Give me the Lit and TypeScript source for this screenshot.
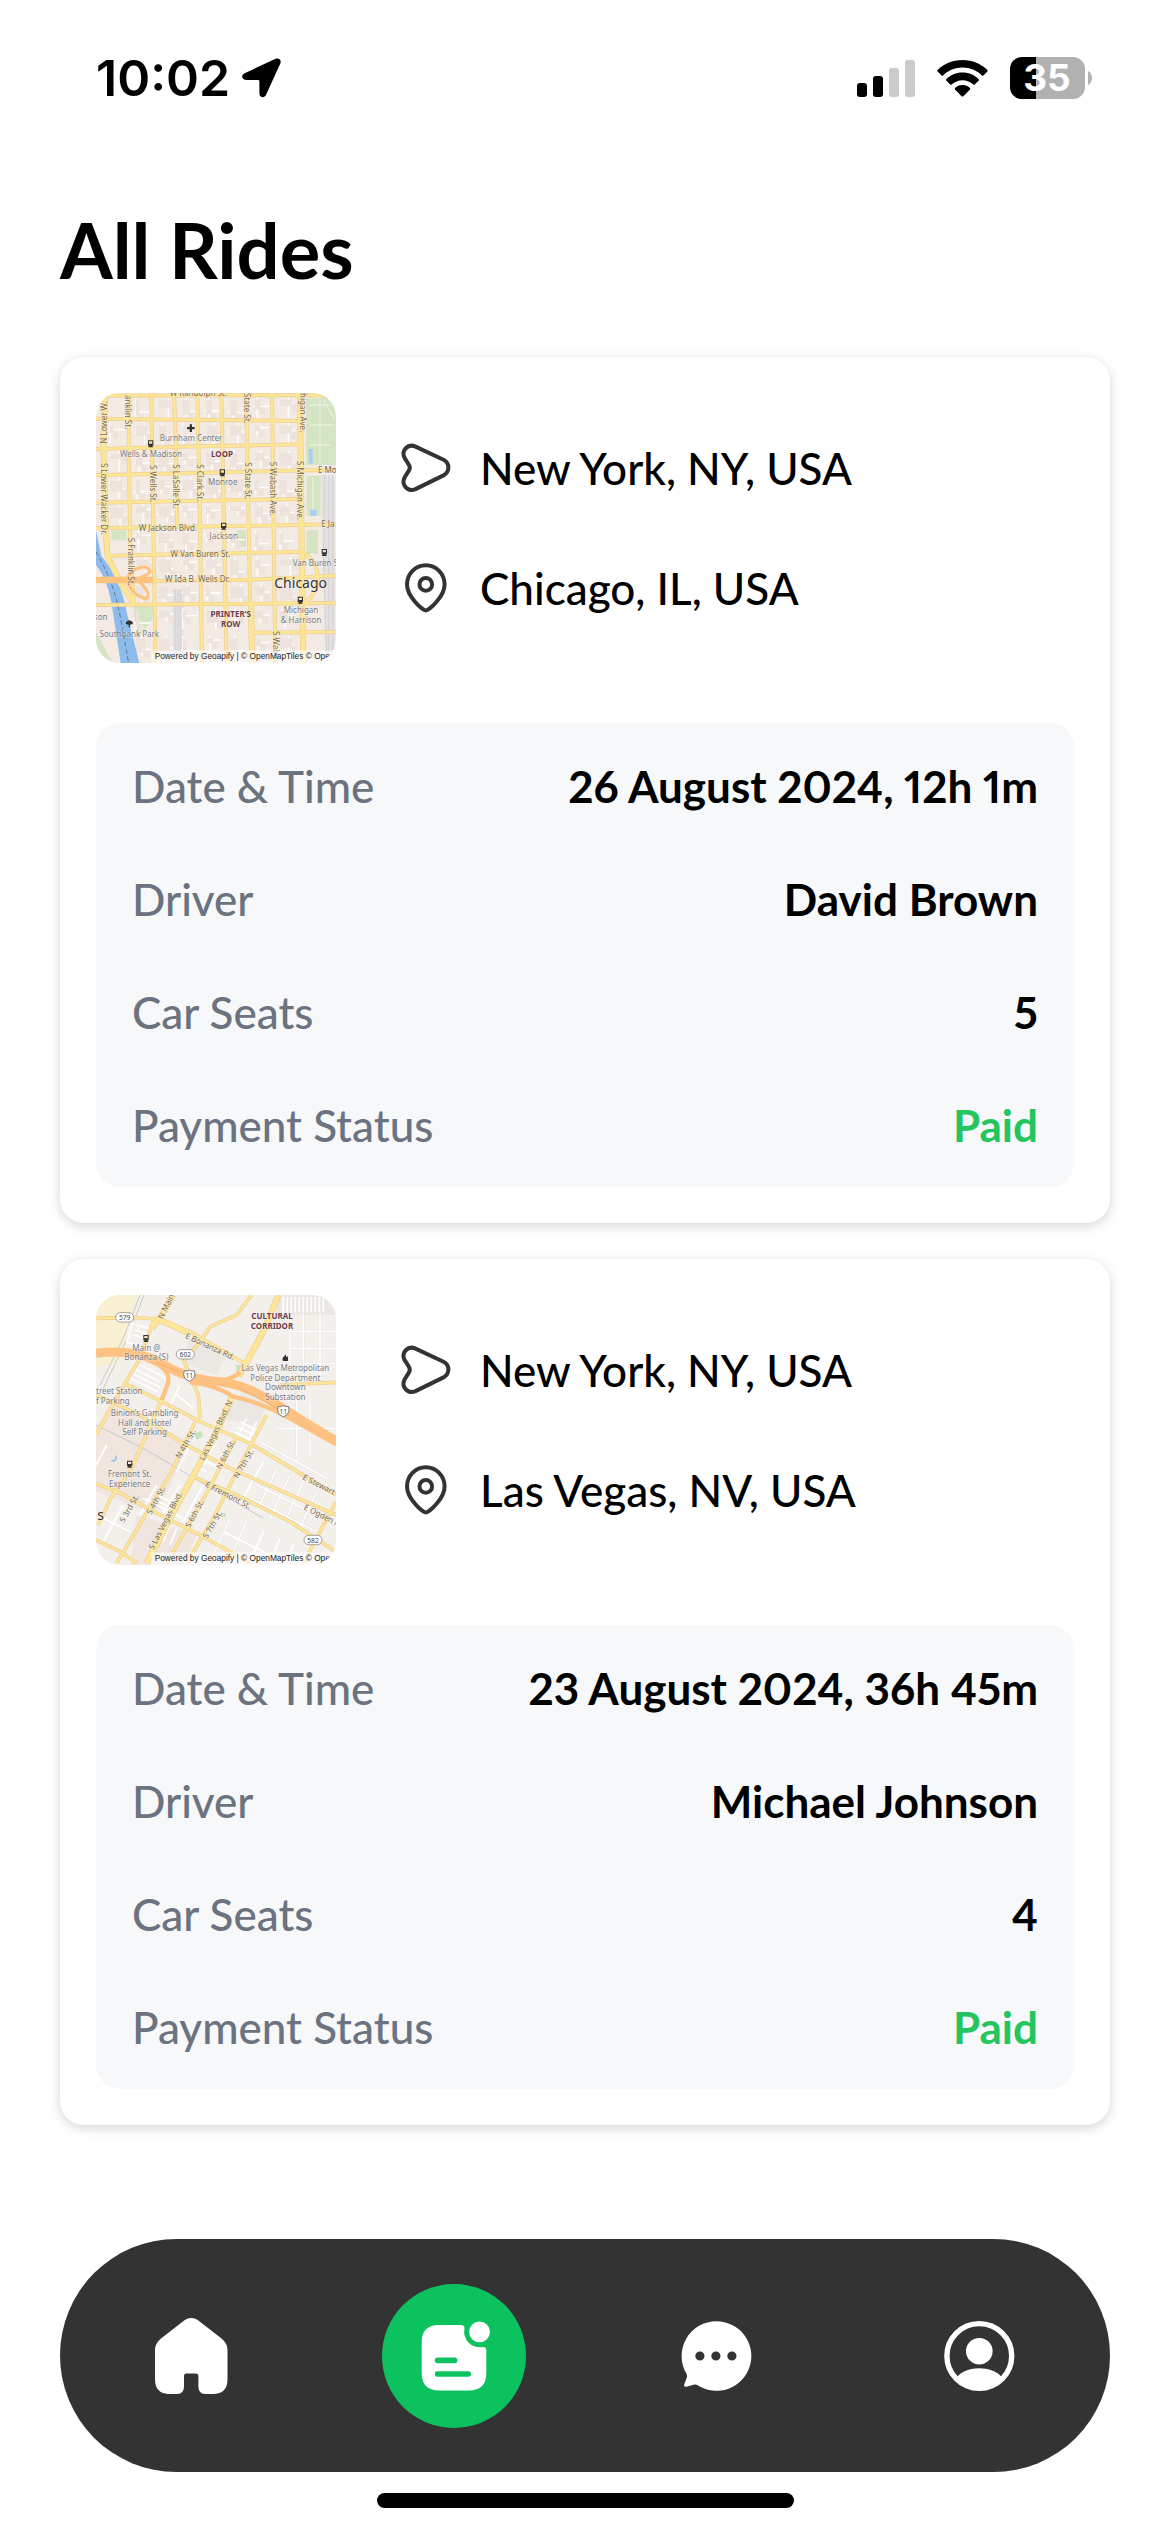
import { LitElement, html, svg, css, nothing, type SVGTemplateResult } from "lit";

interface Ride {
  from: string;
  to: string;
  map: "chicago" | "vegas";
  time: string;
  driver: string;
  seats: number;
  status: string;
}

const RIDES: Ride[] = [
  {
    from: "New York, NY, USA",
    to: "Chicago, IL, USA",
    map: "chicago",
    time: "26 August 2024, 12h 1m",
    driver: "David Brown",
    seats: 5,
    status: "Paid",
  },
  {
    from: "New York, NY, USA",
    to: "Las Vegas, NV, USA",
    map: "vegas",
    time: "23 August 2024, 36h 45m",
    driver: "Michael Johnson",
    seats: 4,
    status: "Paid",
  },
];

/* ---------- map thumbnails ---------- */

type Label = [text: string, x: number, y: number, angle: number, kind: string];

const label = ([text, x, y, angle, kind]: Label) =>
  svg`<text class=${kind} transform="translate(${x} ${y}) rotate(${angle})">${text}</text>`;

const CHICAGO_STREETS = [
  "M18 32 L690 30 L738 42",
  "M18 101 L640 108",
  "M18 192 L330 184 L640 178",
  "M18 271 L400 262 L738 254",
  "M18 353 L640 342",
  "M18 430 L738 418",
  "M56 512 L645 500",
  "M190 588 L480 584 L738 572",
  "M18 660 L738 654",
  "M486 743 L738 741",
  "M118 24 L116 200 L122 520 L132 650",
  "M184 24 L188 300 L197 834",
  "M252 24 L258 200 L262 428",
  "M322 24 L330 420 L336 834",
  "M394 24 L402 420 L410 834",
  "M468 24 L476 420 L484 834",
  "M546 24 L551 420 L556 834",
  "M645 505 Q680 530 684 575 Q682 630 642 654",
];

const CHICAGO_WIDE = [
  "M46 24 L40 180 L48 440 L52 512",
  "M630 24 L634 400 L640 834",
  "M484 655 L486 834",
  "M52 512 L95 600 L132 655",
];

const CHICAGO_LABELS: Label[] = [
  ["W Randolph St.", 325, 34, 0, "road mid"],
  ["Burnham Center", 303, 167, 0, "poi"],
  ["Wells & Madison", 183, 216, 0, "poi"],
  ["LOOP", 396, 216, 0, "area"],
  ["Monroe", 398, 301, 0, "poi"],
  ["W Jackson Blvd.", 234, 437, 0, "road mid"],
  ["Jackson", 401, 463, 0, "poi"],
  ["W Van Buren St.", 331, 516, 0, "road mid"],
  ["Van Buren S", 676, 542, 0, "poi"],
  ["W Ida B. Wells Dr.", 322, 591, 0, "road mid"],
  ["Michigan", 633, 685, 0, "poi"],
  ["& Harrison", 633, 713, 0, "poi"],
  ["PRINTER’S", 422, 697, 0, "area"],
  ["ROW", 422, 727, 0, "area"],
  ["Southbank Park", 118, 755, 0, "poi"],
  ["son", 32, 706, 0, "poi"],
  ["N Lower W.", 50, 176, -90, "road"],
  ["anklin St.", 106, 30, 90, "road"],
  ["State St.", 463, 24, 90, "road"],
  ["higan Ave.", 631, 24, 90, "road"],
  ["S Lower Wacker Dr.", 32, 234, 90, "road"],
  ["S Wells St.", 180, 240, 90, "road"],
  ["S LaSalle St.", 250, 238, 90, "road"],
  ["S Clark St.", 320, 238, 90, "road"],
  ["S State St.", 466, 232, 90, "road"],
  ["S Wabash Ave.", 541, 230, 90, "road"],
  ["S Michigan Ave.", 622, 228, 90, "road"],
  ["S Franklin St.", 113, 458, 90, "road"],
  ["S Waba", 550, 738, 90, "road"],
  ["E Mo", 684, 264, 0, "road"],
  ["E Ja", 694, 426, 0, "road"],
];

const blocks = (seed: number, cols: number[], rows: number[]) => {
  const out: SVGTemplateResult[] = [];
  let s = seed;
  const next = () => (s = (s * 16807) % 2147483647) / 2147483647;
  for (const x of cols) {
    for (const y of rows) {
      const a = Math.round(16 + next() * 34);
      const b = Math.round(20 + next() * 34);
      out.push(
        next() > 0.45
          ? svg`<path class="alley" d="M${x + a} ${y + 8} v62 M${x + 12} ${y + b} h48"/>`
          : svg`<path class="alley" d="M${x + 10} ${y + b} h50 M${x + a} ${y + b} v22"/>`,
        svg`<rect class="building" x=${x + 16} y=${y + 16} width=${a - 6} height=${b - 6}></rect>`,
        svg`<rect class="building" x=${x + a + 8} y=${y + b + 6} width="16" height="20"></rect>`,
      );
    }
  }
  return out;
};

const station = (x: number, y: number) =>
  svg`<path class="glyph" fill-rule="evenodd" d="M${x - 8} ${y - 10} h16 v16 h-16z m3 3 v7 h10 v-7z M${x - 8} ${y + 11} l4 -5 h8 l4 5z"/>`;

const attribution = (bottom: number) => svg`
  <rect x="184" y=${bottom - 38} width="554" height="38" fill="#fff" fill-opacity=".6"></rect>
  <text class="credit" x="194" y=${bottom - 13}>Powered by Geoapify | © OpenMapTiles © Oper</text>`;

const chicagoMap = svg`
  <rect x="18" y="24" width="720" height="810" fill="#f2eae3"></rect>
  <path fill="#d5e5c3" d="M648 40 h74 l16 16 v184 h-90z M650 272 h42 v120 h-42z M650 436 h34 v70 h-34z M130 660 h62 v34 l-50 70z M18 740 l50 94 h-50z M64 436 h46 v30 h-46z M440 436 h28 v50 h-28z"/>
  <path fill="none" stroke="#e6efda" stroke-width="4" d="M660 60 h60 M660 120 h70 M660 180 h60 M690 44 v190 M668 280 v110 M700 44 l34 60"/>
  <path fill="#a9cdef" d="M656 192 h12 v44 h-12z M660 374 h20 v18 h-20z"/>
  <path fill="#e2e0e0" d="M694 270 h40 v564 h-28 l-4 -200z M248 612 h32 v190 h-32z"/>
  <path stroke="#cfcccf" stroke-width="2" fill="none" d="M704 272 L700 560 L712 834 M716 272 V834 M728 272 V834 M256 612 V800 M264 612 V800 M272 612 V800"/>
  ${blocks(91, [122, 190, 262, 332, 404, 478, 552], [28, 106, 188, 268, 348, 428, 508, 588, 662, 744])}
  ${blocks(17, [44], [106, 190, 272, 352])}
  <path fill="#8dbcec" d="M18 436 L34 512 Q96 590 112 690 L148 834 H92 L70 690 Q58 590 18 540z"/>
  <path stroke="#65758c" stroke-width="3" stroke-dasharray="14 8" fill="none" d="M18 500 Q70 590 88 680 L116 834"/>
  <g fill="none" stroke="#eccf96" stroke-width="12">${CHICAGO_STREETS.map((d) => svg`<path d=${d} />`)}</g>
  <g fill="none" stroke="#eccf96" stroke-width="18">${CHICAGO_WIDE.map((d) => svg`<path d=${d} />`)}</g>
  <g fill="none" stroke="#fde596" stroke-width="8">${CHICAGO_STREETS.map((d) => svg`<path d=${d} />`)}</g>
  <g fill="none" stroke="#fde596" stroke-width="14">${CHICAGO_WIDE.map((d) => svg`<path d=${d} />`)}</g>
  <g fill="none" stroke="#fdc27c">
    <path stroke-width="20" d="M18 585 H190"/>
    <path stroke-width="9" d="M110 580 Q130 545 165 546 Q200 560 150 578 M110 590 Q130 630 165 642 Q190 630 150 592"/>
  </g>
  <path class="glyph" d="M299 118 h7 v8 h8 v7 h-8 v8 h-7 v-8 h-8 v-7 h8z M108 712 q10 -12 20 0 q4 6 -8 7 v8 h-4 v-8 q-12 -1 -8 -7z"/>
  ${station(182, 176)}${station(397, 263)}${station(401, 423)}${station(703, 502)}${station(631, 645)}
  ${CHICAGO_LABELS.map(label)}
  <text class="city" x="632" y="608">Chicago</text>
  ${attribution(834)}`;

const VEGAS_STREETS = [
  "M18 100 L130 97 L195 102 L300 140 L465 236",
  "M110 298 L220 352 L330 410 L480 475 L738 630",
  "M18 330 L150 390 L270 470 L420 550 L738 690",
  "M310 576 L440 630 L600 710 L738 800",
  "M18 596 L90 624 L210 690 L330 750 L480 834",
  "M18 765 L90 800 L140 834",
  "M215 345 L120 560 L62 640 L24 720",
  "M320 400 L240 570 L160 700 L80 834",
  "M530 390 L440 560 L370 700 L290 834",
  "M440 455 L330 660 L230 834",
  "M190 108 L150 220 L90 320 L18 450",
  "M738 650 L690 740 L640 834",
  "M280 230 L330 170 L360 125 L440 90 L485 30",
  "M282 232 L300 270 L325 330 L330 400",
  "M570 300 L738 292",
];

const VEGAS_WIDE = [
  "M250 30 L215 90 L185 130",
  "M565 30 L520 140 L465 240 L445 275",
  "M425 340 L380 440 L300 590 L240 700 L170 834",
  "M200 102 L240 118 L300 146",
];

const VEGAS_LABELS: Label[] = [
  ["CULTURAL", 546, 102, 0, "area"],
  ["CORRIDOR", 546, 132, 0, "area"],
  ["N Main", 218, 104, -64, "road"],
  ["E Bonanza Rd.", 284, 158, 25, "road"],
  ["Main @", 169, 198, 0, "poi"],
  ["Bonanza (S)", 169, 226, 0, "poi"],
  ["Las Vegas Metropolitan", 586, 259, 0, "poi"],
  ["Police Department", 586, 287, 0, "poi"],
  ["Downtown", 586, 316, 0, "poi"],
  ["Substation", 586, 345, 0, "poi"],
  ["treet Station", 18, 328, 0, "poi start"],
  ["f Parking", 18, 357, 0, "poi start"],
  ["Binion’s Gambling", 164, 394, 0, "poi"],
  ["Hall and Hotel", 164, 422, 0, "poi"],
  ["Self Parking", 164, 451, 0, "poi"],
  ["Fremont St.", 119, 576, 0, "poi"],
  ["Experience", 119, 605, 0, "poi"],
  ["Las Vegas Blvd. N", 342, 528, -64, "road"],
  ["N 4th St.", 270, 522, -60, "road"],
  ["N 6th St.", 392, 554, -62, "road"],
  ["N 7th St.", 444, 582, -60, "road"],
  ["E Fremont St.", 344, 604, 27, "road"],
  ["E Stewart", 636, 582, 27, "road"],
  ["E Ogden A", 640, 672, 27, "road"],
  ["S 3rd St.", 102, 714, -60, "road"],
  ["S 4th St.", 184, 690, -62, "road"],
  ["S Las Vegas Blvd.", 190, 796, -63, "road"],
  ["S 6th St.", 300, 730, -62, "road"],
  ["S 7th St.", 352, 762, -60, "road"],
];

const routeShield = (text: string, x: number, y: number) => svg`
  <rect x=${x - 27} y=${y - 14} width="54" height="28" rx="14" fill="#fff" stroke="#777" stroke-width="2"></rect>
  <text class="shield" x=${x} y=${y + 8}>${text}</text>`;

const interstate = (x: number, y: number) => svg`
  <path fill="#fff" stroke="#667" stroke-width="2.5" d="M${x - 15} ${y - 14} q7 3 15 -2 q8 5 15 2 q8 22 -15 32 q-23 -10 -15 -32z"/>
  <text class="shield" x=${x} y=${y + 9}>11</text>`;

const vegasMap = svg`
  <rect x="18" y="30" width="720" height="810" fill="#f3f0ec"></rect>
  <path fill="#f9f0d4" d="M18 30 H140 L90 180 L18 190z M18 100 H120 L90 230 L18 250z"/>
  <path fill="#f0e6df" d="M60 350 L300 470 L200 690 L18 620 V430z M140 690 l180 60 -40 90 H120z"/>
  <path fill="#ebe7e2" d="M470 300 L540 330 L500 430 L400 400z M560 30 h178 v60 h-178z M300 160 l110 50 -30 60 -110 -40z"/>
  <path fill="#c8e4bd" d="M312 446 l20 -8 8 16 -20 10z M438 240 l20 0 -4 28 -14 0z M392 684 l16 0 0 12 -16 0z"/>
  <path stroke="#c9c6c4" stroke-width="3" fill="none" d="M150 30 L100 160 L30 300 M162 30 L112 160 L40 310 M18 420 L160 490 L330 590 L520 700"/>
  <g fill="none" stroke="#dedad6" stroke-width="7">
    <path d="M600 130 V290 M640 84 V290 M690 84 V290 M600 140 h138 M600 190 h138 M640 236 h98 M620 330 v180 M660 350 v170 M560 430 h178 M510 470 l200 110"/>
    <path d="M560 550 l-60 130 M600 570 l-60 130 M640 590 l-60 130 M680 620 l-60 130 M500 600 l200 100 M480 640 l200 100 M420 700 l-50 110 M470 710 l-50 110"/>
  </g>
  <g fill="none" stroke="#fff" stroke-width="5">
    <path d="M600 130 V290 M640 84 V290 M690 84 V290 M600 140 h138 M600 190 h138 M640 236 h98 M620 330 v180 M660 350 v170 M560 430 h178 M510 470 l200 110"/>
    <path d="M130 110 l-20 60 50 20 M140 120 l40 10 M135 135 l40 12 M130 150 l40 12 M130 250 l80 40 M125 265 l85 42 M120 280 l85 42 M150 240 l80 40 M240 360 l60 40 M260 330 l50 40 M270 300 l-30 60"/>
    <path d="M580 36 v46 M592 36 v46 M604 36 v46 M616 36 v46 M628 36 v46 M640 36 v46 M652 36 v46 M664 36 v46 M676 36 v46 M688 36 v46 M700 40 v42"/>
    <path d="M450 410 l50 24 M442 426 l50 24 M434 442 l50 24 M470 400 l-30 60 M500 410 l-30 66"/>
    <path d="M560 550 l-60 130 M600 570 l-60 130 M640 590 l-60 130 M680 620 l-60 130 M520 530 l-60 110 M500 600 l200 100 M480 640 l200 100 M450 560 l60 30 M420 700 l-50 110 M470 710 l-50 110 M520 740 l-40 90 M570 760 l-30 70 M400 740 l180 90 M610 780 l-20 50"/>
    <path d="M300 480 l-40 80 M350 560 l-40 -20 M340 600 l-60 110 M270 600 l-60 100 M200 600 l-50 90 M100 660 l-60 110 M160 640 l120 60 M240 720 l-20 50 M260 730 l-20 50 M280 740 l-20 50 M50 480 l-32 60 M40 700 l80 40 M200 630 l50 24 M194 644 l50 24 M330 520 l70 34 M380 470 l-40 70"/>
  </g>
  <g fill="none" stroke="#eccd90" stroke-width="11">${VEGAS_STREETS.map((d) => svg`<path d=${d} />`)}</g>
  <g fill="none" stroke="#eccd90" stroke-width="19">${VEGAS_WIDE.map((d) => svg`<path d=${d} />`)}</g>
  <g fill="none" stroke="#fde59a" stroke-width="7">${VEGAS_STREETS.map((d) => svg`<path d=${d} />`)}</g>
  <g fill="none" stroke="#fde59a" stroke-width="15">${VEGAS_WIDE.map((d) => svg`<path d=${d} />`)}</g>
  <g fill="none" stroke="#fdc182">
    <path stroke-width="27" d="M18 205 Q130 190 210 232 Q290 285 390 290 Q470 300 550 352 Q640 410 738 468"/>
    <path stroke-width="13" d="M300 292 Q380 300 430 335 Q520 355 600 400 L738 478 M350 290 Q420 290 450 262 M170 225 Q250 250 232 300 L215 345"/>
  </g>
  <path fill="none" stroke="#eda75c" stroke-width="2" d="M440 305 Q520 345 600 392 M200 232 Q260 262 320 272"/>
  <path fill="none" stroke="#94bff0" stroke-width="5" d="M78 512 q4 16 -14 16"/>
  ${station(168, 160)}${station(119, 537)}
  <path class="glyph" d="M578 218 l10 -10 v8 l6 -2 v10 l-16 2z M576 224 h18 v4 h-14z"/>
  ${VEGAS_LABELS.map(label)}
  ${routeShield("579", 104, 97)}${routeShield("602", 286, 208)}${routeShield("582", 669, 765)}
  ${interstate(298, 271)}${interstate(580, 378)}
  <text class="city" x="32" y="706">s</text>
  ${attribution(840)}`;

/* ---------- line icons on a 60 unit grid ---------- */

const icon60 = (body: SVGTemplateResult) => html`
  <svg class="stop-icon" viewBox="0 0 60 60" aria-hidden="true">${body}</svg>`;

const originIcon = icon60(svg`
  <path d="M19 8.4 L47.5 21.8 C54 25.2 54 33.8 47.5 37.4 L19 51.4 C12 54 5 47 8.4 39.8 L13 32.4 Q14.6 29.6 13 27 L8.4 19.6 C5 12.6 12 5.4 19 8.4 Z"/>`);

const destinationIcon = icon60(svg`
  <path d="M29.8 52.4 C26.6 52.4 11 38.6 11 26.4 A18.8 19.2 0 0 1 48.6 26.4 C48.6 38.6 33 52.4 29.8 52.4 Z"/>
  <circle cx="29.8" cy="26.4" r="6.3"></circle>`);

/* ---------- filled tab icons on an 80 unit grid ---------- */

const TABS: { name: string; href: string; icon: SVGTemplateResult }[] = [
  {
    name: "Home",
    href: "#home",
    icon: svg`<path d="M32.5 5 C37 1 43.5 1 48 5 L70.5 22.6 Q76.5 27.6 76.5 34 V63 Q76.5 78 62 78 H55 Q47.4 78 47.4 70.4 V60 Q47.4 57.4 45 57.4 H35.4 Q33 57.4 33 60 V70.4 Q33 78 25.4 78 H18.5 Q4 78 4 63 V34 Q4 27.6 10 22.6 Z"/>`,
  },
  {
    name: "Rides",
    href: "#rides",
    icon: svg`
      <path fill-rule="evenodd" d="M25 9 H47 Q51 9 50.4 13 A15.6 15.6 0 0 0 67.6 31.2 Q72.3 30.6 72.3 34.5 V57 Q72.3 74.4 55 74.4 H25 Q7.7 74.4 7.7 57 V26 Q7.7 9 25 9 Z
        M23.6 41.6 a2.8 2.8 0 0 0 0 5.6 h17 a2.8 2.8 0 0 0 0 -5.6 Z
        M23.6 55.2 a2.8 2.8 0 0 0 0 5.6 h30.6 a2.8 2.8 0 0 0 0 -5.6 Z"/>
      <circle cx="65.5" cy="15.9" r="10.4"></circle>`,
  },
  {
    name: "Chat",
    href: "#chat",
    icon: svg`
      <path fill-rule="evenodd" d="M40.5 5.2 A34.8 34.8 0 1 1 21.6 69.2 Q20 68.2 18.4 68.6 L10.4 70.8 Q7.8 71.2 8.2 68.6 L10.8 61.4 Q11.4 59.6 10.4 57.6 A34.8 34.8 0 0 1 40.5 5.2 Z
        M28.5 40 a4.6 4.6 0 1 0 -9.2 0 a4.6 4.6 0 1 0 9.2 0 Z
        M44.5 40 a4.6 4.6 0 1 0 -9.2 0 a4.6 4.6 0 1 0 9.2 0 Z
        M60.5 40 a4.6 4.6 0 1 0 -9.2 0 a4.6 4.6 0 1 0 9.2 0 Z"/>`,
  },
  {
    name: "Profile",
    href: "#profile",
    icon: svg`
      <circle cx="40.3" cy="40" r="32.4" fill="none" stroke="#fff" stroke-width="5.4"></circle>
      <circle cx="40.3" cy="35.2" r="13.3"></circle>
      <path d="M18 61 C27 49.4 53.6 49.4 62.6 61 Q54 73.6 40.3 73.6 Q26.6 73.6 18 61 Z"/>`,
  },
];

/* ---------- elements ---------- */

class StatusBar extends LitElement {
  static styles = css`
    :host {
      display: flex;
      align-items: center;
      justify-content: space-between;
      height: 156px;
      padding: 0 78px 0 96px;
      font-family: Inter, sans-serif;
    }
    .group {
      display: flex;
      align-items: center;
    }
    .left {
      gap: 12px;
    }
    .right {
      gap: 22px;
    }
    .time {
      font-size: 50px;
      font-weight: 600;
      line-height: 60px;
    }
    svg {
      display: block;
    }
    .level {
      font-size: 37px;
      font-weight: 700;
      text-anchor: middle;
      fill: #fff;
    }
  `;

  render() {
    return html`
      <div class="group left">
        <span class="time">10:02</span>
        <svg width="39" height="40" viewBox="0 0 39 40" aria-hidden="true">
          <path d="M33.6 .8 C37 -.6 39.6 2 38.4 5.2 L24 37 C22.4 40.4 17.6 39.6 17.4 35.8 V23.4 Q17.4 22 16 22 H4 C-.4 21.8 -1.2 17 2.6 15.2 Z" />
        </svg>
      </div>
      <div class="group right">
        <svg width="58" height="38" viewBox="0 0 58 38" aria-hidden="true">
          <rect y="24" width="10" height="14" rx="3"></rect>
          <rect x="16" y="17" width="10" height="21" rx="3"></rect>
          <rect x="32" y="9" width="10" height="29" rx="3" fill="#cbcbcb"></rect>
          <rect x="48" y="1" width="10" height="37" rx="3" fill="#cbcbcb"></rect>
        </svg>
        <svg width="51" height="38" viewBox="0 0 51 38" aria-hidden="true">
          <path d="M25.5 1 C35.5 1 44.5 5 50.4 11 Q51 11.7 50.4 12.4 L46.4 16.4 Q45.6 17 44.9 16.4 C39.8 11.5 33 8.6 25.5 8.6 C18 8.6 11.2 11.5 6.1 16.4 Q5.4 17 4.6 16.4 L.6 12.4 Q0 11.7 .6 11 C6.5 5 15.5 1 25.5 1 Z" />
          <path d="M25.5 13.6 C32 13.6 37.6 16.2 41.8 20.2 Q42.4 20.8 41.8 21.5 L37.8 25.5 Q37 26.1 36.3 25.5 C33.4 22.8 29.7 21.2 25.5 21.2 C21.3 21.2 17.6 22.8 14.7 25.5 Q14 26.1 13.2 25.5 L9.2 21.5 Q8.6 20.8 9.2 20.2 C13.4 16.2 19 13.6 25.5 13.6 Z" />
          <path d="M25.5 26 C28.5 26 31.1 27.2 33 29 Q33.6 29.7 33 30.4 L26.4 37.2 Q25.5 38 24.6 37.2 L18 30.4 Q17.4 29.7 18 29 C19.9 27.2 22.5 26 25.5 26 Z" />
        </svg>
        <svg width="82" height="42" viewBox="0 0 82 42" role="img" aria-label="Battery level">
          <rect width="75" height="42" rx="12" fill="#b1b1b1"></rect>
          <path d="M12 0 H26 V42 H12 A12 12 0 0 1 0 30 V12 A12 12 0 0 1 12 0 Z" />
          <path d="M78 14 Q82 16.4 82 21 Q82 25.6 78 28 Z" fill="#b1b1b1" />
          <text class="level" x="37" y="34">35</text>
        </svg>
      </div>
    `;
  }
}
customElements.define("status-bar", StatusBar);

class RideCard extends LitElement {
  static properties = { ride: { attribute: false } };
  declare ride: Ride;

  static styles = css`
    :host {
      display: block;
      padding: 36px;
      border-radius: 24px;
      background: #fff;
      box-shadow: 0 3px 12px rgba(0, 0, 0, 0.17);
    }
    .trip {
      display: flex;
      align-items: center;
      gap: 60px;
    }
    .map {
      flex: none;
      width: 240px;
      height: 270px;
      border-radius: 24px;
    }
    .stops {
      display: grid;
      gap: 60px;
      margin: 0;
      padding: 0;
      list-style: none;
    }
    .stop {
      display: flex;
      align-items: center;
      gap: 24px;
      font-size: 44px;
      font-weight: 500;
      line-height: 60px;
    }
    .stop-icon {
      width: 60px;
      height: 60px;
      fill: none;
      stroke: #333;
      stroke-width: 4;
      stroke-linejoin: round;
    }
    .details {
      display: grid;
      gap: 60px;
      margin: 60px 0 0;
      padding: 37px 36px 35px;
      border-radius: 24px;
      background: #f6f8fa;
      font-size: 44px;
      line-height: 53px;
    }
    .row {
      display: flex;
      justify-content: space-between;
      gap: 24px;
    }
    .name {
      color: #6b7280;
      font-weight: 500;
    }
    .value {
      margin: 0;
      font-weight: 700;
      font-variant-numeric: proportional-nums;
      text-align: right;
    }
    .paid {
      color: #22c55e;
    }
    .map text {
      font-family: "Noto Sans", sans-serif;
      font-size: 24px;
      paint-order: stroke;
      stroke: rgba(255, 255, 255, 0.45);
      stroke-width: 3px;
    }
    .map .road {
      fill: #76684e;
    }
    .map .mid,
    .map .poi,
    .map .area,
    .map .city {
      text-anchor: middle;
    }
    .map .poi {
      fill: #777b85;
    }
    .map .start {
      text-anchor: start;
    }
    .map .area {
      fill: #6d3b4a;
      font-weight: 700;
    }
    .map .city {
      fill: #333;
      font-size: 42px;
    }
    .map .shield {
      fill: #444;
      font-size: 20px;
      text-anchor: middle;
      stroke: none;
    }
    .map .credit {
      fill: #222;
      font-family: "Liberation Sans", sans-serif;
      font-size: 25px;
      stroke: none;
    }
    .glyph {
      fill: #333;
    }
    .alley {
      fill: none;
      stroke: #fff;
      stroke-width: 4;
    }
    .building {
      fill: #ede3dc;
    }
  `;

  render() {
    const { from, to, map, time, driver, seats, status } = this.ride;
    const chicago = map === "chicago";
    return html`
      <div class="trip">
        <svg class="map" viewBox=${chicago ? "18 24 720 810" : "18 30 720 810"} role="img" aria-label="Map">
          ${chicago ? chicagoMap : vegasMap}
        </svg>
        <ul class="stops">
          <li class="stop">${originIcon}<span>${from}</span></li>
          <li class="stop">${destinationIcon}<span>${to}</span></li>
        </ul>
      </div>
      <dl class="details">
        <div class="row"><dt class="name">Date &amp; Time</dt><dd class="value">${time}</dd></div>
        <div class="row"><dt class="name">Driver</dt><dd class="value">${driver}</dd></div>
        <div class="row"><dt class="name">Car Seats</dt><dd class="value">${seats}</dd></div>
        <div class="row"><dt class="name">Payment Status</dt><dd class="value paid">${status}</dd></div>
      </dl>
    `;
  }
}
customElements.define("ride-card", RideCard);

class TabBar extends LitElement {
  static properties = { current: {} };
  declare current: string;

  static styles = css`
    :host {
      display: block;
    }
    .bar {
      display: grid;
      grid-template-columns: repeat(4, 1fr);
      justify-items: center;
      padding: 45px 0 44px;
      border-radius: 150px;
      background: #333;
    }
    .tab {
      display: grid;
      place-items: center;
      width: 144px;
      height: 144px;
      border-radius: 50%;
    }
    .tab[aria-current] {
      background: #0cc25f;
    }
    .icon {
      width: 80px;
      height: 80px;
      fill: #fff;
    }
  `;

  render() {
    return html`
      <nav class="bar" aria-label="Main">
        ${TABS.map(
          ({ name, href, icon }) => html`
            <a class="tab" href=${href} aria-label=${name} aria-current=${name === this.current ? "page" : nothing}>
              <svg class="icon" viewBox="0 0 80 80" aria-hidden="true">${icon}</svg>
            </a>
          `,
        )}
      </nav>
    `;
  }
}
customElements.define("tab-bar", TabBar);

class AppRoot extends LitElement {
  static styles = css`
    :host {
      display: flex;
      flex-direction: column;
      box-sizing: border-box;
      min-height: 100vh;
      background: #fff;
      color: #000;
      font-family: Lato, "Open Sans", sans-serif;
    }
    .content {
      display: grid;
      gap: 36px;
      padding: 50px 60px 60px;
    }
    .title {
      margin: 0 0 27px;
      font-size: 76px;
      font-weight: 700;
      line-height: 88px;
    }
    .footer {
      display: grid;
      gap: 21px;
      margin-top: auto;
      padding: 0 60px 24px;
    }
    .home-indicator {
      justify-self: center;
      width: 417px;
      height: 15px;
      border-radius: 8px;
      background: #000;
    }
  `;

  render() {
    return html`
      <status-bar></status-bar>
      <main class="content">
        <h1 class="title">All Rides</h1>
        ${RIDES.map((ride) => html`<ride-card .ride=${ride}></ride-card>`)}
      </main>
      <footer class="footer">
        <tab-bar current="Rides"></tab-bar>
        <div class="home-indicator"></div>
      </footer>
    `;
  }
}
customElements.define("app-root", AppRoot);
